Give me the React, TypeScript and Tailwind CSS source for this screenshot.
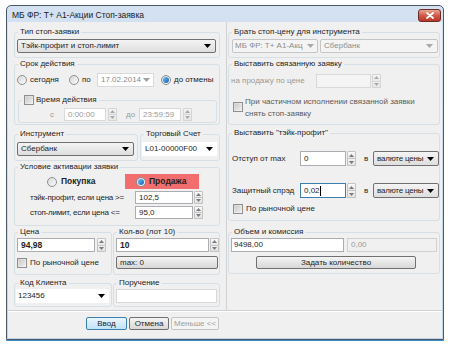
import React from "react";

const DownArrow = ({ c = "#000" }: { c?: string }) => (
  <svg width="7" height="4" viewBox="0 0 7 4" className="shrink-0">
    <path d="M0 0H7L3.5 4Z" fill={c} />
  </svg>
);

function Spin({ cls = "" }: { cls?: string }) {
  return (
    <div className={`flex flex-col w-[9px] shrink-0 ${cls}`}>
      <div className="flex-1 border border-[#c3c3c3] rounded-t-[1px] bg-gradient-to-b from-[#fafafa] to-[#e8e8e8] flex items-center justify-center">
        <svg width="5" height="3" viewBox="0 0 5 3">
          <path d="M0 3L2.5 0L5 3Z" fill="#7a7a7a" />
        </svg>
      </div>
      <div className="flex-1 border border-t-0 border-[#c3c3c3] rounded-b-[1px] bg-gradient-to-b from-[#f2f2f2] to-[#e2e2e2] flex items-center justify-center">
        <svg width="5" height="3" viewBox="0 0 5 3">
          <path d="M0 0L2.5 3L5 0Z" fill="#7a7a7a" />
        </svg>
      </div>
    </div>
  );
}

function Radio({ checked = false }: { checked?: boolean }) {
  return (
    <span className="w-[10px] h-[10px] shrink-0 rounded-full border border-[#8f8f8f] bg-gradient-to-br from-[#d8d8d8] to-[#fbfbfb] flex items-center justify-center">
      {checked && (
        <span className="w-[6px] h-[6px] rounded-full bg-gradient-to-br from-[#6fc0f5] to-[#0b5fb8]" />
      )}
    </span>
  );
}

function Check() {
  return (
    <span className="block w-[10px] h-[10px] shrink-0 border border-[#8f8f8f] bg-gradient-to-br from-[#d6d6d6] to-[#f6f6f6] p-[1px]">
      <span className="block w-full h-full bg-gradient-to-br from-[#cbcbcb] to-[#ececec]" />
    </span>
  );
}

function Group({
  label,
  cls = "",
  children,
}: {
  label: React.ReactNode;
  cls?: string;
  children?: React.ReactNode;
}) {
  return (
    <fieldset className={`border border-[#d5dfe5] rounded-[3px] shrink-0 min-w-0 ${cls}`}>
      <legend className="ml-[3px] px-[2px] leading-[10px] h-[10px] text-[#1e1e1e]">{label}</legend>
      {children}
    </fieldset>
  );
}

export default function App() {
  return (
    <div className="w-[450px] h-[348px] bg-white pt-[5px] pl-[6px] font-['Liberation_Sans',Arial,sans-serif] text-[8px] leading-none text-[#1e1e1e] whitespace-nowrap overflow-hidden">
      <div className="w-[438px] h-[335px] flex flex-col rounded-t-[5px] border border-[#4b5a6b] bg-gradient-to-b from-[#d3e1f1] to-[#c2d4ea] shadow-[0_1px_0_#3a8ec0]">
        {/* title bar */}
        <div className="h-[16px] flex items-start">
          <div className="flex-1 pl-[5px] pt-[4px] text-[8.5px] leading-[10px] text-[#1a1a1a]">МБ ФР: Т+ А1-Акции Стоп-заявка</div>
          <div className="mt-[3px] mr-[2px] w-[23px] h-[13px] rounded-[3px] border border-[#6e2a24] bg-gradient-to-b from-[#e8a493] via-[#cf5a4a] to-[#b9352a] flex items-center justify-center">
            <svg width="8" height="7" viewBox="0 0 8 7">
              <path d="M1 1L7 6M7 1L1 6" stroke="#fff" strokeWidth="1.8" strokeLinecap="round" />
            </svg>
          </div>
        </div>
        {/* client */}
        <div className="flex-1 mx-[1px] mb-[1px] bg-[#f0f0f0] flex flex-col">
          <div className="flex h-[288px]">
            {/* LEFT COLUMN */}
            <div className="w-[218px] pl-[6px] flex flex-col">
              <Group label="Тип стоп-заявки" cls="mt-[5px] h-[31px] w-[206px]">
                <div className="mt-[2px] ml-[2px] w-[199px] h-[14px] border border-[#707070] rounded-[2px] bg-gradient-to-b from-[#f4f4f4] to-[#dedede] flex items-center justify-between pl-[3px] pr-[4px]">
                  <span>Тэйк-профит и стоп-лимит</span>
                  <DownArrow />
                </div>
              </Group>

              <Group label="Срок действия" cls="mt-[1px] h-[66px] w-[206px]">
                <div className="mt-[4px] h-[14px] flex items-center">
                  <div className="ml-[2px] w-[52px] flex items-center">
                    <Radio />
                    <span className="ml-[3px]">сегодня</span>
                  </div>
                  <div className="w-[28px] flex items-center">
                    <Radio />
                    <span className="ml-[3px]">по</span>
                  </div>
                  <div className="w-[57px] h-[14px] border border-[#d9d9d9] bg-white flex items-center justify-between pl-[3px] pr-[3px] text-[#8a8a8a]">
                    <span>17.02.2014</span>
                    <DownArrow c="#a0a0a0" />
                  </div>
                  <div className="ml-[7px] flex items-center">
                    <Radio checked />
                    <span className="ml-[3px]">до отмены</span>
                  </div>
                </div>
                <Group
                  label={
                    <span className="flex items-center">
                      <Check />
                      <span className="ml-[2px]">Время действия</span>
                    </span>
                  }
                  cls="mt-[8px] ml-[3px] w-[199px] h-[28px]"
                >
                  <div className="mt-[3px] h-[13px] flex items-center text-[#9a9a9a]">
                    <span className="w-[45px] text-right pr-[10px]">с</span>
                    <div className="w-[42px] h-[13px] border border-[#d9d9d9] bg-white pl-[3px] flex items-center">0:00:00</div>
                    <Spin cls="ml-[2px] h-[13px] opacity-60" />
                    <span className="w-[22px] pl-[9px]">до</span>
                    <div className="w-[42px] h-[13px] border border-[#d9d9d9] bg-white pl-[3px] flex items-center">23:59:59</div>
                    <Spin cls="ml-[2px] h-[13px] opacity-60" />
                  </div>
                </Group>
              </Group>

              <div className="mt-[4px] flex">
                <Group label="Инструмент" cls="h-[32px] w-[124px]">
                  <div className="mt-[3px] ml-[2px] w-[117px] h-[14px] border border-[#707070] rounded-[2px] bg-gradient-to-b from-[#f4f4f4] to-[#dedede] flex items-center justify-between pl-[3px] pr-[4px]">
                    <span>Сбербанк</span>
                    <DownArrow />
                  </div>
                </Group>
                <Group label="Торговый Счет" cls="ml-[2px] h-[32px] w-[80px]">
                  <div className="mt-[3px] ml-[1px] w-[75px] h-[14px] bg-white flex items-center justify-between pl-[3px] pr-[4px]">
                    <span>L01-00000F00</span>
                    <DownArrow />
                  </div>
                </Group>
              </div>

              <Group label="Условие активации заявки" cls="mt-[1px] h-[64px] w-[206px]">
                <div className="mt-[2px] h-[15px] flex items-center">
                  <div className="ml-[32px] w-[78px] flex items-center">
                    <Radio />
                    <span className="ml-[4px] font-bold text-[8.5px]">Покупка</span>
                  </div>
                  <div className="w-[74px] h-[15px] bg-[#f26d6d] flex items-center pl-[11px]">
                    <Radio checked />
                    <span className="ml-[3px] font-bold text-[8.5px]">Продажа</span>
                  </div>
                </div>
                <div className="mt-[2px] h-[13px] flex items-center">
                  <span className="w-[120px] pl-[15px] tracking-[-0.2px]">тэйк-профит, если цена &gt;=</span>
                  <div className="w-[58px] h-[13px] border border-[#abadb3] bg-white pl-[3px] flex items-center">102,5</div>
                  <Spin cls="ml-[1px] h-[13px]" />
                </div>
                <div className="mt-[2px] h-[13px] flex items-center">
                  <span className="w-[120px] pl-[15px] tracking-[-0.2px]">стоп-лимит, если цена &lt;=</span>
                  <div className="w-[58px] h-[13px] border border-[#abadb3] bg-white pl-[3px] flex items-center">95,0</div>
                  <Spin cls="ml-[1px] h-[13px]" />
                </div>
              </Group>

              <div className="mt-[1px] flex">
                <Group label="Цена" cls="h-[48px] w-[98px]">
                  <div className="mt-[1px] ml-[2px] h-[14px] flex">
                    <div className="w-[78px] h-[14px] border border-[#abadb3] bg-white pl-[3px] flex items-center font-bold text-[8.5px]">94,98</div>
                    <Spin cls="ml-[2px] h-[14px]" />
                  </div>
                  <div className="mt-[4px] ml-[2px] h-[13px] flex items-center">
                    <Check />
                    <span className="ml-[3px]">По рыночной цене</span>
                  </div>
                </Group>
                <Group label="Кол-во (лот 10)" cls="ml-[1px] h-[48px] w-[107px]">
                  <div className="mt-[1px] ml-[2px] h-[14px] flex">
                    <div className="w-[94px] h-[14px] border border-[#abadb3] bg-white pl-[3px] flex items-center font-bold text-[8.5px]">10</div>
                    <Spin cls="ml-[1px] h-[14px]" />
                  </div>
                  <div className="mt-[4px] ml-[2px] w-[102px] h-[13px] border border-[#707070] rounded-[2px] bg-gradient-to-b from-[#f4f4f4] to-[#d8d8d8] pl-[3px] flex items-center">
                    max: 0
                  </div>
                </Group>
              </div>

              <div className="mt-[3px] flex">
                <Group label="Код Клиента" cls="h-[29px] w-[98px]">
                  <div className="mt-[1px] ml-[1px] w-[93px] h-[14px] bg-white flex items-center justify-between pl-[2px] pr-[4px]">
                    <span>123456</span>
                    <DownArrow />
                  </div>
                </Group>
                <Group label="Поручение" cls="ml-[1px] h-[29px] w-[107px]">
                  <div className="mt-[1px] ml-[2px] w-[101px] h-[14px] border border-[#d9d9d9] bg-white" />
                </Group>
              </div>
            </div>

            <div className="w-[1px] bg-[#d2d2d2]" />

            {/* RIGHT COLUMN */}
            <div className="w-[215px] pl-[1px] flex flex-col">
              <Group label="Брать стоп-цену для инструмента" cls="mt-[5px] h-[31px] w-[212px]">
                <div className="mt-[2px] ml-[3px] h-[14px] flex">
                  <div className="w-[86px] h-[14px] border border-[#c5c5c5] rounded-[2px] bg-[#f4f4f4] flex items-center justify-between pl-[2px] pr-[3px] text-[#8d8d8d] overflow-hidden">
                    <span>МБ ФР: Т+ А1-Акц</span>
                    <DownArrow c="#a8a8a8" />
                  </div>
                  <div className="ml-[2px] w-[118px] h-[14px] border border-[#c5c5c5] rounded-[2px] bg-[#f4f4f4] flex items-center justify-between pl-[3px] pr-[4px] text-[#8d8d8d]">
                    <span>Сбербанк</span>
                    <DownArrow c="#a8a8a8" />
                  </div>
                </div>
              </Group>

              <Group label="Выставить связанную заявку" cls="mt-[1px] h-[66px] w-[212px]">
                <div className="mt-[5px] h-[14px] flex items-center">
                  <span className="w-[87px] pl-[2px] text-[#9a9a9a]">на продажу по цене</span>
                  <div className="w-[55px] h-[14px] border border-[#d9d9d9] bg-[#f4f4f4]" />
                  <Spin cls="ml-[1px] h-[14px] opacity-60" />
                </div>
                <div className="mt-[8px] flex items-start">
                  <div className="ml-[4px] mt-[6px]">
                    <Check />
                  </div>
                  <div className="ml-[2px] leading-[12px] text-[#5a5a5a]">
                    <div>При частичном исполнении связанной заявки</div>
                    <div>снять стоп-заявку</div>
                  </div>
                </div>
              </Group>

              <Group label={"Выставить \"тэйк-профит\""} cls="mt-[3px] h-[93px] w-[212px]">
                <div className="mt-[13px] h-[15px] flex items-center">
                  <span className="w-[71px] pl-[3px]">Отступ от max</span>
                  <div className="w-[46px] h-[15px] border border-[#abadb3] bg-white pl-[3px] flex items-center">0</div>
                  <Spin cls="ml-[1px] h-[15px]" />
                  <span className="w-[17px] pl-[8px]">в</span>
                  <div className="w-[66px] h-[15px] border border-[#707070] rounded-[2px] bg-gradient-to-b from-[#f4f4f4] to-[#dedede] flex items-center justify-between pl-[3px] pr-[4px]">
                    <span className="tracking-[-0.2px]">валюте цены</span>
                    <DownArrow />
                  </div>
                </div>
                <div className="mt-[17px] h-[15px] flex items-center">
                  <span className="w-[71px] pl-[3px]">Защитный спрэд</span>
                  <div className="w-[46px] h-[15px] border border-[#3c7fb1] bg-white pl-[3px] flex items-center">
                    0,02<span className="w-[1px] h-[10px] bg-black" />
                  </div>
                  <Spin cls="ml-[1px] h-[15px]" />
                  <span className="w-[17px] pl-[8px]">в</span>
                  <div className="w-[66px] h-[15px] border border-[#707070] rounded-[2px] bg-gradient-to-b from-[#f4f4f4] to-[#dedede] flex items-center justify-between pl-[3px] pr-[4px]">
                    <span className="tracking-[-0.2px]">валюте цены</span>
                    <DownArrow />
                  </div>
                </div>
                <div className="mt-[6px] ml-[4px] h-[10px] flex items-center">
                  <Check />
                  <span className="ml-[3px]">По рыночной цене</span>
                </div>
              </Group>

              <Group label="Объем и комиссия" cls="mt-[6px] h-[47px] w-[212px]">
                <div className="mt-[1px] ml-[2px] h-[14px] flex">
                  <div className="w-[113px] h-[14px] border border-[#abadb3] bg-white pl-[2px] flex items-center">9498,00</div>
                  <div className="ml-[3px] w-[90px] h-[14px] border border-[#d0d0d0] bg-[#f0f0f0] pl-[3px] flex items-center text-[#9a9a9a]">0,00</div>
                </div>
                <div className="mt-[4px] ml-[27px] w-[160px] h-[13px] border border-[#707070] rounded-[2px] bg-gradient-to-b from-[#f4f4f4] to-[#d8d8d8] flex items-center justify-center">
                  Задать количество
                </div>
              </Group>
            </div>
          </div>

          {/* footer */}
          <div className="flex-1 flex flex-col">
            <div className="h-[1px] bg-[#d0d0d0]" />
            <div className="h-[1px] bg-white" />
            <div className="mt-[5px] flex">
              <div className="ml-[78px] w-[41px] h-[13px] border border-[#3c7fb1] rounded-[2px] bg-gradient-to-b from-[#eaf6fd] to-[#bfe3f9] flex items-center justify-center">Ввод</div>
              <div className="ml-[2px] w-[40px] h-[13px] border border-[#707070] rounded-[2px] bg-gradient-to-b from-[#f4f4f4] to-[#d8d8d8] flex items-center justify-center">Отмена</div>
              <div className="ml-[2px] w-[48px] h-[13px] border border-[#c5c5c5] rounded-[2px] bg-[#f4f4f4] flex items-center justify-center text-[#a0a0a0]">Меньше &lt;&lt;</div>
            </div>
          </div>
        </div>
      </div>
    </div>
  );
}
